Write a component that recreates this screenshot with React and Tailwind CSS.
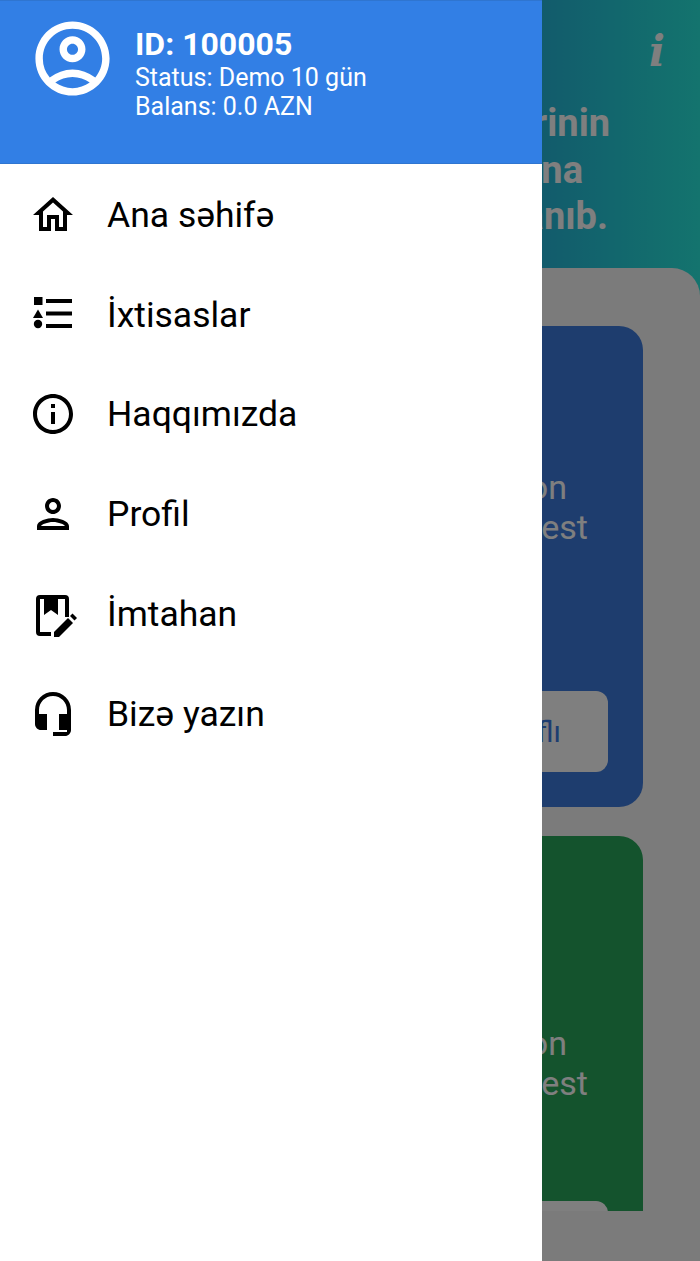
import { MdOutlineHome, MdInfoOutline, MdOutlinePerson, MdHeadsetMic, MdOutlineAccountCircle } from 'react-icons/md'

function ShapesListIcon() {
  return (
    <svg viewBox="0 0 48 48" width="48" height="48" fill="currentColor">
      <rect x="5" y="6" width="8.5" height="8" />
      <path d="M9 18.5l5 8.5h-10z" />
      <circle cx="9" cy="33" r="4.2" />
      <rect x="17" y="8" width="26" height="4" />
      <rect x="17" y="20.5" width="26" height="4" />
      <rect x="17" y="33" width="26" height="4" />
    </svg>
  )
}

function ExamIcon() {
  return (
    <svg viewBox="0 0 48 48" width="48" height="48" fill="currentColor">
      <path d="M7 9a4 4 0 0 1 4-4h25a4 4 0 0 1 4 4v18h-4V9H11v33h11v4H11a4 4 0 0 1-4-4z" />
      <path d="M15 7h14v18l-7-5-7 5z" />
      <path d="M25 47v-5l14-14 5 5-14 14z" />
      <path d="M41 26l2.5-2.5 4.5 4.5-2.5 2.5z" />
    </svg>
  )
}

const menu = [
  { label: 'Ana səhifə', icon: <MdOutlineHome size={48} /> },
  { label: 'İxtisaslar', icon: <ShapesListIcon /> },
  { label: 'Haqqımızda', icon: <MdInfoOutline size={48} /> },
  { label: 'Profil', icon: <MdOutlinePerson size={48} /> },
  { label: 'İmtahan', icon: <ExamIcon /> },
  { label: 'Bizə yazın', icon: <MdHeadsetMic size={48} /> },
]

export default function App() {
  return (
    <div className="relative h-[1261px] w-[700px] overflow-hidden bg-white font-['Roboto',sans-serif]">
      {/* page behind the drawer */}
      <div className="flex h-full flex-col bg-gradient-to-r from-[#1f7fe0] via-[#24b6d8] via-[77%] to-[#28e8dc]">
        <div className="relative h-[268px] shrink-0 text-right text-[38px] font-bold leading-[47px] text-white">
          <div className="pt-[100px] pr-[90px]">Fənlərinin</div>
          <div className="pr-[117px]">imtahana</div>
          <div className="-mt-[1px] pr-[92px]">hazırlanıb.</div>
          <span className="absolute right-[35px] top-[27px] font-['DejaVu_Serif',serif] text-[42px] font-bold italic leading-[50px]">i</span>
        </div>
        <div className="flex-1 rounded-tr-[28px] bg-[#f6f6f6]">
          <div className="mt-[58px] h-[885px] overflow-hidden px-[57px]">
            <div className="flex h-[481px] flex-col rounded-3xl bg-[#3d7bdc]">
              <div className="mt-[141px] text-right text-[34px] leading-[40px] text-white">
                <div className="pr-[76px]">Demo versiyon</div>
                <div className="pr-[55px]">Pulsuz sınaq test</div>
              </div>
              <div className="mx-[35px] mt-[144px] flex h-[81px] shrink-0 items-center justify-end rounded-xl bg-white pr-[47px] text-[30px] text-[#3a7ae0]">
                Ətraflı
              </div>
            </div>
            <div className="mt-[29px] flex h-[481px] flex-col rounded-3xl bg-[#28a65a]">
              <div className="mt-[187px] text-right text-[34px] leading-[40px] text-white">
                <div className="pr-[76px]">Demo versiyon</div>
                <div className="pr-[55px]">Pulsuz sınaq test</div>
              </div>
              <div className="mx-[35px] mt-[98px] h-[81px] shrink-0 rounded-xl bg-white" />
            </div>
          </div>
        </div>
      </div>

      {/* scrim */}
      <div className="absolute inset-0 bg-black/50" />

      {/* drawer */}
      <aside className="absolute inset-y-0 left-0 flex w-[542px] flex-col bg-white">
        <header className="flex h-[164px] shrink-0 items-start border-y border-[#2f75d0] bg-[#327fe5] pl-[28px] pt-[13px] text-white">
          <MdOutlineAccountCircle size={89} />
          <div className="ml-[18px] pt-[10px]">
            <div className="text-[32px] font-bold leading-[40px]">ID: 100005</div>
            <div className="text-[25px] leading-[28px]">Status: Demo 10 gün</div>
            <div className="text-[25px] leading-[29px]">Balans: 0.0 AZN</div>
          </div>
        </header>
        <nav className="flex flex-col pt-[1px]">
          {menu.map((item) => (
            <div key={item.label} className="flex h-[99.8px] items-center pl-[29px] text-black">
              {item.icon}
              <span className="ml-[30px] text-[35.5px] leading-[40px]">{item.label}</span>
            </div>
          ))}
        </nav>
      </aside>
    </div>
  )
}
